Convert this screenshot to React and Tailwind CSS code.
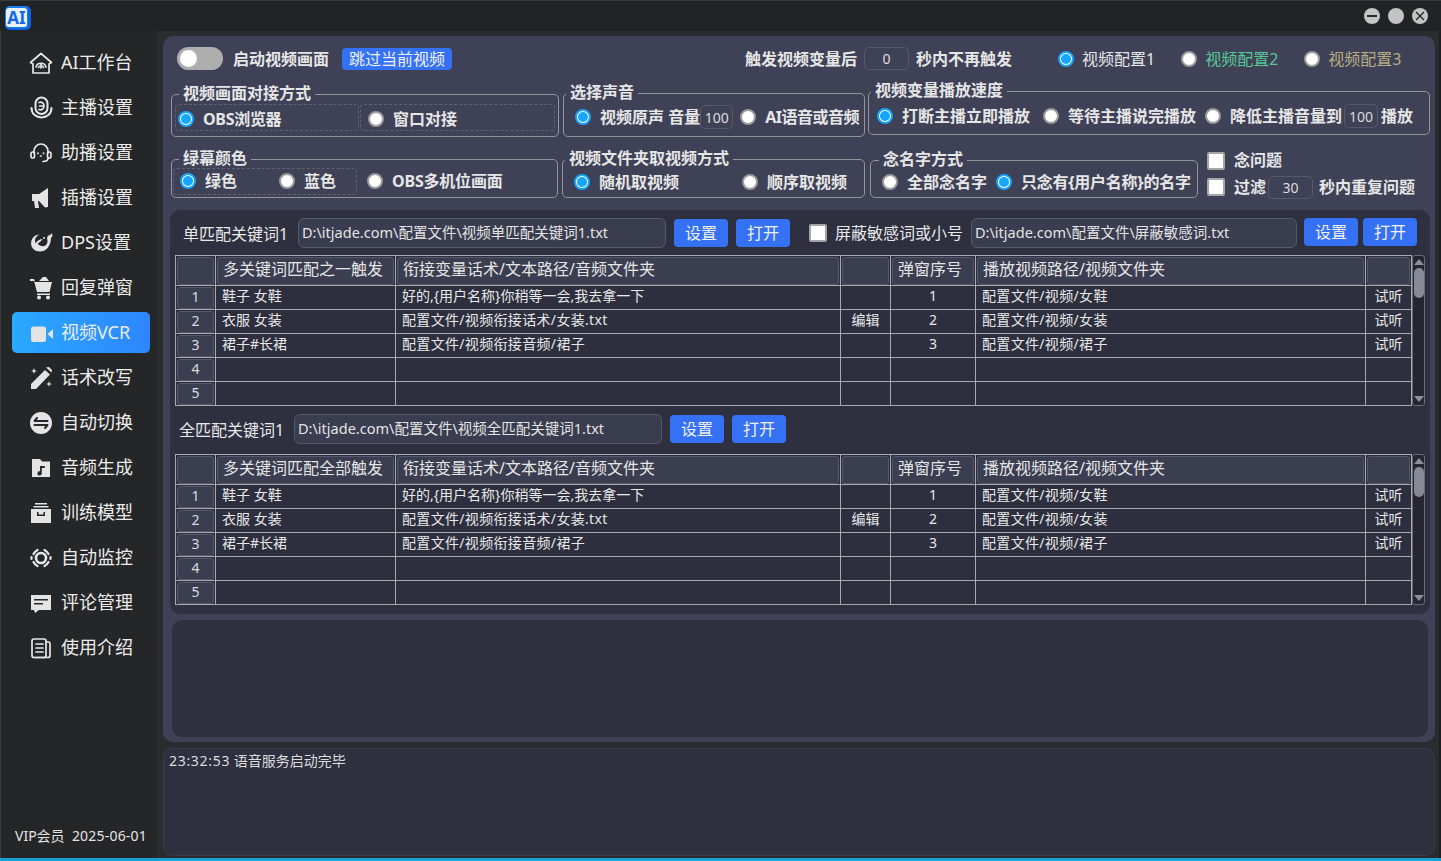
import React from "react";

const I = ({ children, fill }) => (
  <svg viewBox="0 0 24 24" className="w-[24px] h-[24px] shrink-0" fill={fill ? "#e4e4e4" : "none"} stroke={fill ? "none" : "#e8e8e8"} strokeWidth="1.7" strokeLinecap="round" strokeLinejoin="round">{children}</svg>
);

const icons = {
  home: <I><path d="M1.500 11.500 12 2.500l10.500 9-2.500 1.500v9H4v-9z" /><path d="M7 16a5.200 5.200 0 0 1 10 0M9.500 16.500a2.600 2.600 0 0 1 5 0M12 13v4" /></I>,
  mic: <I><rect x="6.500" y="1.500" width="12" height="16.500" rx="6" strokeWidth="2" /><path d="M2.500 12c0 12.500 20 12.500 20 0" strokeWidth="2" /><path d="M10 6.500c2.500-1 5 .500 5 3.500s-2.500 4.500-5 3.500M10.500 10H14" /></I>,
  headset: <I><path d="M5 12V10a7 7 0 0 1 14 0v2" /><rect x="2" y="11" width="3.500" height="6" rx="1.700" /><rect x="18.500" y="11" width="3.500" height="6" rx="1.700" /><path d="M19 17c0 2.500-2 3.500-5 3.500" /><path d="M9 12v.5M14.500 12v.5M11.500 15h.5" /></I>,
  horn: <I fill><path d="M3 8h7l9-6v19l-3 .5-6-6.500H9l1 7H6l-1-7H3z" /></I>,
  whale: <I fill><path fillRule="evenodd" d="M19 4.500c1.500.200 3-.800 4-2.500l.5 3-1.500 2c-.200 7-4 13.500-11 13.500-5 0-9-3.500-9-8.500C2.500 7 6 3.500 10.500 3.500c-3 1.500-4.500 3.500-4.500 6 0 1 .2 2 .6 3C8 9.500 11 8 13.500 8c-1.200 2-2.500 3-4.800 4.500 1.800 3 6 3.500 8.300 1.500 1.500-1.500 2-4 1-6.500z" /><circle cx="15" cy="7" r="1" /></I>,
  cart: <I fill><path d="M1 3h4l.8 3H23l-2.500 10H8L5 5H1z" /><rect x="8" y="17.500" width="13" height="1.500" /><circle cx="10" cy="21.500" r="2" /><circle cx="19" cy="21.500" r="2" /><path d="M10 5l4-4 3 0 3 4z" /></I>,
  video: <I fill><rect x="2" y="5.500" width="15" height="15.500" rx="2.500" /><path d="M18.500 13 24.500 7.500v11z" /></I>,
  wand: <I fill><path d="M16 4l5 4.500L7 23H2v-5z" /><path d="M17 1.500l3-.5 3 3-.5 2.500z" /><path d="M5 2l.8 2.200L8 5l-2.200.8L5 8l-.8-2.200L2 5l2.200-.8zM20 15l.7 2.300L23 18l-2.300.7L20 21l-.7-2.300L17 18l2.300-.7z" /></I>,
  swap: <I><circle cx="12" cy="12" r="11" fill="#e4e4e4" stroke="none" /><path d="M5.500 10h13M8 7l-2.500 3M18.500 14h-13M16 17l2.500-3" stroke="#26272a" strokeWidth="2" /></I>,
  music: <I fill><path fillRule="evenodd" d="M3 3h8l2 2.500h8V21H3zM11 10v5.200a2.200 2.200 0 1 0 1.800 2V12h3v-2z" /></I>,
  archive: <I fill><path d="M6 2h12v1.500H6zM4.500 5h15v1.500h-15z" /><path fillRule="evenodd" d="M2 8h20v14H2zM8 11v4h8v-4h-1.500v2.500h-5V11z" /></I>,
  ring: <I><circle cx="12" cy="12" r="5" strokeWidth="2.600" /><path d="M4.500 8a9.500 9.500 0 0 1 4-4M15.500 4a9.500 9.500 0 0 1 4 4M19.500 16a9.500 9.500 0 0 1-4 4M8.500 20a9.500 9.500 0 0 1-4-4M2.500 11v2M21.500 11v2" strokeWidth="2.200" /></I>,
  chat: <I fill><path fillRule="evenodd" d="M2 4h20v15H10l-4 3-1-3H2zM5 8v1.500h14V8zM5 12v1.500h9V12z" /></I>,
  doc: <I><rect x="3" y="3" width="14" height="18.500" rx="2" /><path d="M17 6h2.500a1.500 1.500 0 0 1 1.500 1.500v12a2 2 0 0 1-2 2H6M7 8h7M7 12h7M7 16h7" /></I>,
};

const nav = [
  ["home", "AI工作台"], ["mic", "主播设置"], ["headset", "助播设置"], ["horn", "插播设置"], ["whale", "DPS设置"],
  ["cart", "回复弹窗"], ["video", "视频VCR"], ["wand", "话术改写"], ["swap", "自动切换"], ["music", "音频生成"],
  ["archive", "训练模型"], ["ring", "自动监控"], ["chat", "评论管理"], ["doc", "使用介绍"],
];

const Radio = ({ on, className = "" }) => (
  <span className={`w-[16px] h-[16px] shrink-0 rounded-full flex items-center justify-center bg-white border-2 ${on ? "border-[#16a6ff]" : "border-[#9b9b9b]"} ${className}`}>
    {on && <span className="w-[10px] h-[10px] rounded-full bg-[#16a6ff]" />}
  </span>
);

const B = "font-bold text-[#e6e6e6]";

const RI = ({ on, children, className = "", text = B }) => (
  <div className={`flex items-center gap-[9px] ${className}`}>
    <Radio on={on} />
    <span className={`whitespace-nowrap text-[16px] ${text}`}>{children}</span>
  </div>
);

const NumBox = ({ v, className = "" }) => (
  <div className={`flex items-center justify-center rounded-[5px] border border-[#56586b] bg-[#3f4156] text-[14px] text-[#dcdcdc] font-normal shrink-0 ${className}`}>{v}</div>
);

const Group = ({ title, titleX = 8, className = "", children }) => (
  <div className={`relative shrink-0 rounded-[5px] border border-[#94949a] flex items-center ${className}`}>
    <span className="absolute -top-[12px] bg-[#3f4156] px-[4px] text-[16px] leading-[20px] font-bold whitespace-nowrap text-[#e6e6e6]" style={{ left: titleX }}>{title}</span>
    {children}
  </div>
);

const Dash = ({ className = "", children }) => (
  <div className={`h-[27px] flex items-center rounded-[4px] border border-dashed border-[#5f6174] ${className}`}>{children}</div>
);

const Btn = ({ children, className = "" }) => (
  <div className={`w-[54px] h-[28px] rounded-[4px] bg-[#3571f5] flex items-center justify-center text-[16px] text-[#f0f0f0] shrink-0 ${className}`}>{children}</div>
);

const Path = ({ children, className = "" }) => (
  <div className={`h-[30px] rounded-[6px] border border-[#56586b] bg-[#3a3c4f] flex items-center pl-[3px] text-[14.500px] text-[#e4e4e4] whitespace-nowrap shrink-0 overflow-hidden ${className}`}>{children}</div>
);

const Check = ({ className = "" }) => (
  <span className={`w-[18px] h-[18px] bg-white border-2 border-[#a5a5a5] rounded-[2px] shrink-0 ${className}`} />
);

const rows = [
  ["鞋子 女鞋", "好的,{用户名称}你稍等一会,我去拿一下", "", "1", "配置文件/视频/女鞋", "试听"],
  ["衣服 女装", "配置文件/视频衔接话术/女装.txt", "编辑", "2", "配置文件/视频/女装", "试听"],
  ["裙子#长裙", "配置文件/视频衔接音频/裙子", "", "3", "配置文件/视频/裙子", "试听"],
  ["", "", "", "", "", ""],
  ["", "", "", "", "", ""],
];

const Hd = ({ children }) => (
  <th className="p-0 border border-[#a9a9ad] font-normal">
    <div className="h-[28px] mx-px rounded-[3px] border border-[#55576a] bg-[#3b3d50] flex items-center pl-[5px] pb-[3px] text-[16px] text-[#e6e6e6] whitespace-nowrap">{children}</div>
  </th>
);

const Td = ({ children, center }) => (
  <td className={`p-0 pb-[3px] border border-[#a9a9ad] h-[24px] text-[14px] leading-[20px] text-[#e8e8e8] whitespace-nowrap overflow-hidden ${center ? "text-center" : "pl-[6px]"} ${typeof children === "string" && children.includes("/") ? "tracking-[0.33px]" : ""}`}>{children}</td>
);

const Table = ({ title }) => (
  <div className="flex ml-[5px] h-[151px] w-[1250px]">
    <table className="table-fixed border-collapse w-[1236px] h-[151px] bg-[#2d2f3e]">
      <colgroup>
        <col className="w-[40px]" /><col className="w-[180px]" /><col className="w-[445px]" /><col className="w-[50px]" /><col className="w-[85px]" /><col className="w-[390px]" /><col className="w-[46px]" />
      </colgroup>
      <thead>
        <tr className="h-[30px]">
          <Hd /><Hd>{title}</Hd><Hd>衔接变量话术/文本路径/音频文件夹</Hd><Hd /><Hd>弹窗序号</Hd><Hd>播放视频路径/视频文件夹</Hd><Hd />
        </tr>
      </thead>
      <tbody>
        {rows.map((r, i) => (
          <tr key={i}>
            <td className="p-0 border border-[#a9a9ad] h-[24px]">
              <div className="h-[22px] mx-px rounded-[3px] border border-[#55576a] bg-[#3b3d50] flex items-center justify-center pb-[3px] text-[14px] text-[#dcdcdc]">{i + 1}</div>
            </td>
            <Td>{r[0]}</Td><Td>{r[1]}</Td><Td center>{r[2]}</Td><Td center>{r[3]}</Td><Td>{r[4]}</Td><Td center>{r[5]}</Td>
          </tr>
        ))}
      </tbody>
    </table>
    <div className="w-[14px] h-[151px] rounded-[3px] border border-[#6a6c7c] bg-[#25262f] flex flex-col items-center pt-[3px] pb-[3px]">
      <span className="w-0 h-0 border-x-[5px] border-x-transparent border-b-[6px] border-b-[#8c8f98]" />
      <span className="mt-[3px] w-[10px] h-[30px] rounded-[5px] bg-[#858a94]" />
      <span className="flex-1" />
      <span className="w-0 h-0 border-x-[5px] border-x-transparent border-t-[6px] border-t-[#8c8f98]" />
    </div>
  </div>
);

export default function App() {
  return (
    <div className="w-[1441px] h-[861px] overflow-hidden flex flex-col bg-[#252628] text-[#e8e8e8] font-['Noto_Sans','Noto_Sans_CJK_SC',sans-serif]">
      <header className="h-[31px] shrink-0 bg-[#222325] border-t border-[#3a3b3d] flex items-center pl-[5px] pr-[13px]">
        <div className="w-[26px] h-[24px] mt-[4px] rounded-[5px] bg-[#1d7cf2] border-r-[3px] border-b-[2px] border-[#0f62e0] flex items-center justify-center">
          <span className="w-[21px] h-[19px] rounded-[3px] bg-[#e8f2ff] flex items-center justify-center text-[#1268e8] text-[17px] leading-none font-bold">AI</span>
        </div>
        <div className="flex-1" />
        <div className="flex gap-[8px]">
          <span className="w-[16px] h-[16px] rounded-full bg-[#c4c4c4] flex items-center justify-center"><span className="w-[10px] h-[2px] bg-[#2a2a2a]" /></span>
          <span className="w-[16px] h-[16px] rounded-full bg-[#c4c4c4]" />
          <span className="w-[16px] h-[16px] rounded-full bg-[#c4c4c4] flex items-center justify-center">
            <svg viewBox="0 0 10 10" className="w-[10px] h-[10px]" stroke="#2a2a2a" strokeWidth="1.400"><path d="M1 1l8 8M9 1l-8 8" /></svg>
          </span>
        </div>
      </header>

      <div className="flex-1 flex min-h-0">
        <aside className="w-[157px] shrink-0 border-l border-[#3a3b3d] flex flex-col pt-[9px] pb-[12px]">
          {nav.map(([k, label]) => (
            <div key={k} className="h-[45px] shrink-0 flex items-center">
              <div className={`flex items-center gap-[8px] w-[138px] h-[41px] ml-[11px] pl-[17px] rounded-[5px] ${label === "视频VCR" ? "bg-gradient-to-r from-[#29a9ff] to-[#2e86ff]" : ""}`}>
                {icons[k]}
                <span className="text-[18px] -mt-[1px] whitespace-nowrap text-[#ececec]">{label}</span>
              </div>
            </div>
          ))}
          <div className="flex-1" />
          <div className="pl-[14px] text-[14px] leading-[20px] whitespace-nowrap text-[#e4e4e4]">VIP会员&nbsp;&nbsp;<span className="tracking-[0.2px]">2025-06-01</span></div>
        </aside>

        <main className="flex-1 bg-[#2a2c2f] border-r-2 border-[#1d1e20] pl-[6px] pr-[4px] pt-[5px] flex flex-col gap-[6px]">
          <section className="h-[706px] rounded-[10px] bg-[#3f4156] flex flex-col">
            <div className="flex items-center h-[23px] mt-[11px] ml-[14px]">
              <div className="w-[46px] h-[23px] rounded-full bg-[#aeaeae] flex items-center pl-[3px]"><span className="w-[17px] h-[17px] rounded-full bg-white" /></div>
              <span className={`ml-[10px] text-[16px] whitespace-nowrap ${B}`}>启动视频画面</span>
              <div className="ml-[13px] w-[110px] h-[22px] rounded-[4px] bg-[#3571f5] flex items-center justify-center text-[16px] whitespace-nowrap text-[#f0f0f0]">跳过当前视频</div>
              <span className={`ml-[293px] text-[16px] whitespace-nowrap ${B}`}>触发视频变量后</span>
              <NumBox v="0" className="ml-[7px] w-[45px] h-[23px]" />
              <span className={`ml-[7px] text-[16px] whitespace-nowrap ${B}`}>秒内不再触发</span>
              <RI on className="ml-[46px]" text="-ml-[1px] text-[#e6e6e6]">视频配置1</RI>
              <RI className="ml-[26px]" text="-ml-[1px] text-[#57c795]">视频配置2</RI>
              <RI className="ml-[26px]" text="-ml-[1px] text-[#b7ad85]">视频配置3</RI>
            </div>

            <div className="flex items-start h-[46px] mt-[21px] ml-[8px]">
              <Group title="视频画面对接方式" titleX={7} className="w-[388px] h-[43px] mt-[3px] pl-[3px] pt-[3px]">
                <Dash className="w-[184px] pl-[2px] pt-[3px]"><RI on text={`${B} tracking-[-0.3px]`}>OBS浏览器</RI></Dash>
                <Dash className="w-[195px] ml-px pl-[7px] pt-[3px]"><RI>窗口对接</RI></Dash>
              </Group>
              <Group title="选择声音" titleX={2} className="w-[302px] h-[44px] mt-[2px] ml-[4px] pl-[11px] pt-[4px]">
                <RI on>视频原声 音量</RI>
                <NumBox v="100" className="w-[33px] h-[24px]" />
                <RI className="ml-[7px]" text={`${B} tracking-[-0.5px]`}>AI语音或音频</RI>
              </Group>
              <Group title="视频变量播放速度" titleX={2} className="w-[562px] h-[44px] ml-[3px] pl-[8px] pt-[6px]">
                <RI on>打断主播立即播放</RI>
                <RI className="ml-[13px]">等待主播说完播放</RI>
                <RI className="ml-[9px]">降低主播音量到</RI>
                <NumBox v="100" className="w-[34px] h-[24px] ml-[2px]" />
                <span className={`ml-[3px] text-[16px] ${B}`}>播放</span>
              </Group>
            </div>

            <div className="flex items-start h-[39px] mt-[22px] ml-[8px]">
              <Group title="绿幕颜色" titleX={7} className="w-[387px] h-[39px] pl-px pt-[5px]">
                <Dash className="w-[184px] pl-[6px]"><RI on>绿色</RI><RI className="ml-[42px]">蓝色</RI></Dash>
                <RI className="ml-[10px]" text={`${B} tracking-[-0.2px]`}>OBS多机位画面</RI>
              </Group>
              <Group title="视频文件夹取视频方式" titleX={2} className="w-[303px] h-[39px] ml-[4px] pl-[11px] pt-[7px]">
                <RI on>随机取视频</RI>
                <RI className="ml-[63px]">顺序取视频</RI>
              </Group>
              <Group title="念名字方式" titleX={8} className="w-[328px] h-[38px] mt-px ml-[5px] pl-[11px] pt-[6px]">
                <RI>全部念名字</RI>
                <RI on className="ml-[9px]" text={`${B} tracking-[-0.25px]`}>只念有{"{用户名称}"}的名字</RI>
              </Group>
              <div className="ml-[9px] -mt-[7px] flex flex-col gap-[8px]">
                <div className="flex items-center h-[18px]"><Check /><span className={`ml-[9px] -mt-[2px] text-[16px] ${B}`}>念问题</span></div>
                <div className="flex items-center h-[18px]">
                  <Check /><span className={`ml-[9px] text-[16px] ${B}`}>过滤</span>
                  <NumBox v="30" className="ml-[2px] w-[45px] h-[23px]" />
                  <span className={`ml-[6px] text-[16px] whitespace-nowrap ${B}`}>秒内重复问题</span>
                </div>
              </div>
            </div>

            <div className="mt-[12px] ml-[7px] w-[1260px] h-[404px] rounded-[10px] bg-[#2e3040] flex flex-col">
              <div className="flex items-center h-[30px] mt-[8px] ml-[13px]">
                <span className="w-[115px] mt-[2px] text-[16px] whitespace-nowrap">单匹配关键词1</span>
                <Path className="w-[368px]">D:\itjade.com\配置文件\视频单匹配关键词1.txt</Path>
                <Btn className="ml-[8px]">设置</Btn>
                <Btn className="ml-[8px]">打开</Btn>
                <Check className="ml-[19px]" />
                <span className="ml-[8px] w-[136px] text-[16px] whitespace-nowrap">屏蔽敏感词或小号</span>
                <Path className="w-[326px]">D:\itjade.com\配置文件\屏蔽敏感词.txt</Path>
                <Btn className="ml-[7px] -mt-[2px]">设置</Btn>
                <Btn className="ml-[5px] -mt-[2px]">打开</Btn>
              </div>
              <div className="h-[7px] shrink-0" />
              <Table title="多关键词匹配之一触发" />
              <div className="flex items-center h-[30px] mt-[8px] ml-[9px]">
                <span className="w-[115px] mt-[2px] text-[16px] whitespace-nowrap">全匹配关键词1</span>
                <Path className="w-[368px]">D:\itjade.com\配置文件\视频全匹配关键词1.txt</Path>
                <Btn className="ml-[8px]">设置</Btn>
                <Btn className="ml-[8px]">打开</Btn>
              </div>
              <div className="h-[10px] shrink-0" />
              <Table title="多关键词匹配全部触发" />
            </div>

            <div className="mt-[6px] ml-[9px] w-[1256px] h-[117px] rounded-[10px] bg-[#2e3040]" />
          </section>

          <section className="h-[108px] rounded-[10px] border border-[#3a3c4a] bg-[#2e3040] pl-[5px] pt-[2px] text-[14px] leading-[20px] text-[#dcdcdc]"><span className="tracking-[0.7px]">23:32:53</span> 语音服务启动完毕</section>
        </main>
      </div>
      <div className="h-[3px] shrink-0 bg-[#1f9fd0]" />
    </div>
  );
}
